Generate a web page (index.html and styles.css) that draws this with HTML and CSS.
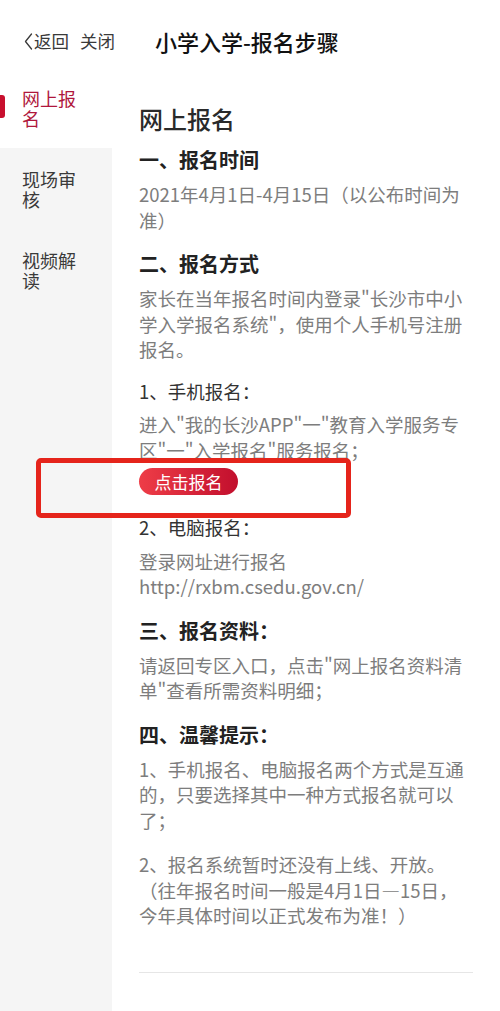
FILE: index.html
```html
<!DOCTYPE html>
<html lang="zh-CN">
<head>
<meta charset="utf-8">
<title>小学入学-报名步骤</title>
<link rel="stylesheet" href="styles.css">
</head>
<body>
<div class="app">
  <header class="topbar">
    <div class="nav-left">
      <a class="nav-link back">
        <svg class="chevron" width="9" height="17" viewBox="0 0 9 17" aria-hidden="true"><polyline points="7.5,1 1.5,8.5 7.5,16" fill="none" stroke="#3a3a3a" stroke-width="1.3" stroke-linejoin="round" stroke-linecap="round"/></svg>返回
      </a>
      <a class="nav-link close">关闭</a>
    </div>
    <h1 class="topbar-title">小学入学-报名步骤</h1>
  </header>
  <div class="main">
    <nav class="sidebar">
      <div class="tab active">网上报名</div>
      <div class="tab">现场审核</div>
      <div class="tab">视频解读</div>
    </nav>
    <article class="content">
      <h2 class="page-title">网上报名</h2>
      <h3 class="section-title first">一、报名时间</h3>
      <p class="text">2021年4月1日-4月15日（以公布时间为准）</p>
      <h3 class="section-title">二、报名方式</h3>
      <p class="text">家长在当年报名时间内登录"长沙市中小学入学报名系统"，使用个人手机号注册报名。</p>
      <p class="sub-title">1、手机报名：</p>
      <p class="text">进入"我的长沙APP"一"教育入学服务专区"一"入学报名"服务报名；</p>
      <div class="btn-row">
        <span class="signup-btn">点击报名</span>
        <span class="highlight-box"></span>
      </div>
      <p class="sub-title after-btn">2、电脑报名：</p>
      <p class="text">登录网址进行报名<br>http://rxbm.csedu.gov.cn/</p>
      <h3 class="section-title">三、报名资料：</h3>
      <p class="text">请返回专区入口，点击"网上报名资料清单"查看所需资料明细；</p>
      <h3 class="section-title">四、温馨提示：</h3>
      <p class="text">1、手机报名、电脑报名两个方式是互通的，只要选择其中一种方式报名就可以了；</p>
      <p class="text gap">2、报名系统暂时还没有上线、开放。（往年报名时间一般是4月1日—15日，今年具体时间以正式发布为准！）</p>
      <hr class="divider">
    </article>
  </div>
</div>
</body>
</html>
```
FILE: styles.css
```css
* { box-sizing: border-box; }
html, body { margin: 0; padding: 0; }
body {
  font-family: "Noto Sans CJK SC", "Noto Sans", sans-serif;
  background: #fff;
  color: #333;
}
.app {
  display: flex;
  flex-direction: column;
  min-height: 1011px;
}
.topbar {
  height: 67px;
  padding: 15px 0 0 24px;
  display: flex;
  align-items: center;
  background: #fff;
}
.nav-left {
  display: flex;
  align-items: center;
  gap: 11px;
}
.nav-link {
  display: flex;
  align-items: center;
  font-size: 17.5px;
  color: #3a3a3a;
  line-height: 24px;
}
.chevron { margin-right: 1px; }
.topbar-title {
  margin: 0 0 0 40px;
  font-size: 22px;
  font-weight: 500;
  color: #111;
  line-height: 30px;
}
.main {
  flex: 1;
  display: flex;
}
.sidebar {
  width: 112px;
  flex: 0 0 112px;
  background: #f5f5f5;
}
.tab {
  position: relative;
  height: 81px;
  padding: 0 30px 0 22px;
  display: flex;
  align-items: center;
  font-size: 18px;
  line-height: 20px;
  color: #3a3a3a;
}
.tab.active {
  background: #fff;
  color: #b0173c;
}
.tab.active::before {
  content: "";
  position: absolute;
  left: 0;
  top: 28px;
  width: 5px;
  height: 23px;
  background: #c8102e;
  border-radius: 0 3px 3px 0;
}
.content {
  flex: 1;
  padding: 36px 34px 0 27px;
}
.page-title {
  margin: 0;
  font-size: 24px;
  line-height: 32px;
  font-weight: 500;
  color: #2a2a2a;
}
.section-title {
  margin: 17px 0 8px;
  font-size: 20px;
  line-height: 28px;
  font-weight: 700;
  color: #222;
}
.section-title.first { margin-top: 11px; }
.text {
  margin: 0;
  font-size: 18.5px;
  line-height: 25.5px;
  color: #7d7d7d;
}
.text.gap { margin-top: 19px; }
.sub-title {
  margin: 16px 0 8px;
  font-size: 18.5px;
  line-height: 25.5px;
  color: #333;
}
.sub-title.after-btn { margin-top: 20px; }
.btn-row {
  position: relative;
  margin-top: 5px;
  display: flex;
}
.signup-btn {
  display: inline-flex;
  align-items: center;
  justify-content: center;
  width: 99px;
  height: 27px;
  border-radius: 14px;
  background: linear-gradient(90deg, #ee3d47 0%, #c20f2d 100%);
  color: #fff;
  font-size: 17px;
  line-height: 27px;
}
.highlight-box {
  position: absolute;
  left: -103px;
  top: -10px;
  width: 315px;
  height: 60px;
  border: 5px solid #e5241b;
  border-radius: 5px;
}
.divider {
  margin: 43px -7px 0 0;
  border: 0;
  border-top: 1px solid #e6e6e6;
}
```
